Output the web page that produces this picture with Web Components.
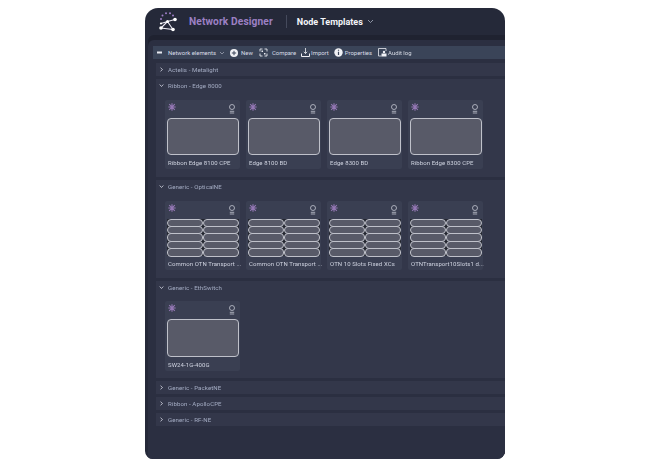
<!DOCTYPE html>
<html><head><meta charset="utf-8"><style>
html,body{margin:0;background:#fff}
body{padding:8px 0 0 145px;font-family:Roboto,"Liberation Sans",sans-serif}
</style></head><body>
<nd-app>
  <nd-header slot="header"></nd-header>
  <nd-toolbar></nd-toolbar>
  <nd-group name="Actelis - Metalight"></nd-group>
  <nd-group name="Ribbon - Edge 8000" open kind="box" style="--pb:8px" labels="Ribbon Edge 8100 CPE|Edge 8100 BD|Edge 8300 BD|Ribbon Edge 8300 CPE"></nd-group>
  <nd-group name="Generic - OpticalNE" open kind="slots" style="--pb:8px" labels="Common OTN Transport ...|Common OTN Transport ...|OTN 10 Slots Fixed XCs|OTNTransport10Slots1 d..."></nd-group>
  <nd-group name="Generic - EthSwitch" open kind="box" style="--pt:7px;--pb:7px;--ch:70px;--ih:38px" labels="SW24-1G-400G"></nd-group>
  <nd-group name="Generic - PacketNE"></nd-group>
  <nd-group name="Ribbon - ApolloCPE"></nd-group>
  <nd-group name="Generic - RF-NE"></nd-group>
</nd-app>
<script>
function def(name, html, init){
  customElements.define(name, class extends HTMLElement{
    constructor(){super();this.attachShadow({mode:'open'}).innerHTML=html;}
    connectedCallback(){init&&init.call(this,this.shadowRoot);}
  });
}
def('nd-app',`<style>
:host{display:flex;flex-direction:column;width:360px;height:451px;background:#252939;border-radius:13px 13px 8px 8px;overflow:hidden;color:#fff;filter:blur(.3px)}
.panel{flex:1;margin:5px 0 0 3px;padding:6px 0 0 5px;background:#2b2f41;border-radius:6px 0 0 0;display:flex;flex-direction:column;box-shadow:0 -5px 0 #1f2230}
.list{display:flex;flex-direction:column;gap:3px;margin:4px 0 0 3px}
</style><slot name="header"></slot><div class="panel"><slot name="tb"></slot><div class="list"><slot></slot></div></div>`,
function(){const t=this.querySelector('nd-toolbar');t&&t.setAttribute('slot','tb');});

def('nd-header',`<style>
:host{display:flex;align-items:center;height:27px;padding-left:13px;flex:none}
svg{display:block;flex:none}
.t{font:700 10.2px Roboto,sans-serif;color:#9c80c4;margin-left:10px;letter-spacing:.12px}
.d{width:1px;height:13px;background:#454a5c;margin:0 10px 0 13px}
.n{font:700 9px Roboto,sans-serif;color:#f4f5fa}
.c{margin-left:4px}
</style>
<svg width="21" height="21" viewBox="0 0 21 21" fill="none">
<g fill="#a07fc8"><circle cx="3" cy="8" r="1"/><circle cx="4.500" cy="4.500" r="1"/><circle cx="8" cy="2.200" r="1"/><circle cx="12" cy="2.200" r="1"/><circle cx="15" cy="4.500" r="1"/></g>
<path d="M3 17 9.500 10.500 17 8.500M9.500 10.500 15 18.500 3 17M3 12.500 9.500 10.500" stroke="#eceaf3" stroke-width="1.100"/>
<g fill="#fff"><circle cx="3" cy="17" r="1.800"/><circle cx="9.500" cy="10.500" r="1.500"/><circle cx="17" cy="8.500" r="1.800"/><circle cx="15" cy="18.500" r="1.800"/><circle cx="3" cy="12.500" r="1.100"/></g></svg>
<span class="t">Network Designer</span><span class="d"></span><span class="n">Node Templates</span>
<svg class="c" width="7" height="5" viewBox="0 0 7 5" fill="none"><path d="M1 1 3.500 3.500 6 1" stroke="#aab0c0" stroke-width=".8"/></svg>`);

def('nd-toolbar',`<style>
:host{display:flex;align-items:center;height:13px;background:#3a4458;font:400 5.95px Roboto,sans-serif;color:#d8dce6;padding-left:4px;flex:none}
span{display:inline-flex;align-items:center;white-space:nowrap}
svg{display:block;flex:none}
</style>
<svg width="6" height="3" style="margin-right:5px"><rect width="5" height="2" y=".5" fill="#e8eaf0"/></svg>
<span>Network elements</span>
<svg width="6" height="4" viewBox="0 0 6 4" fill="none" style="margin:0 5px 0 3px"><path d="M1 1 3 3 5 1" stroke="#aab0c0" stroke-width=".7"/></svg>
<svg width="8" height="8" viewBox="0 0 8 8" style="margin-right:3px"><circle cx="4" cy="4" r="4" fill="#f0f1f5"/><path d="M4 1.800v4.400M1.800 4h4.400" stroke="#3a4458" stroke-width="1"/></svg>
<span style="margin-right:6px">New</span>
<svg width="9" height="9" viewBox="0 0 9 9" fill="#e8eaf0" style="margin-right:4px"><path d="M1 3.500V1h2.500M5.500 1H8v2.500M8 5.500V8H5.500M3.500 8H1V5.500" fill="none" stroke="#e8eaf0" stroke-width=".9"/><rect x="2.500" y="2.500" width="1.500" height="1.500"/><rect x="5" y="5" width="1.500" height="1.500"/></svg>
<span style="margin-right:5px">Compare</span>
<svg width="9" height="9" viewBox="0 0 9 9" fill="none" stroke="#f0f1f5" style="margin-right:1px"><path d="M4.500 0v5.500M2.800 3.800 4.500 5.500 6.200 3.800" stroke-width=".8"/><path d="M.5 5.500v3h8v-3" stroke-width="1"/></svg>
<span style="margin-right:5px">Import</span>
<svg width="9" height="9" viewBox="0 0 9 9" style="margin-right:2px"><circle cx="4.500" cy="4.500" r="4.200" fill="#f0f1f5"/><path d="M4.500 3.700v3.300M4.500 1.700v1.100" stroke="#3a4458" stroke-width="1.200"/></svg>
<span style="margin-right:6px">Properties</span>
<svg width="9" height="9" viewBox="0 0 9 9" fill="none" style="margin-right:1px"><path d="M.5 8V.5h7.500v2.500M.5 8h3" stroke="#e8eaf0" stroke-width=".8"/><rect x="3.500" y="5.500" width="5" height="3" fill="#f0f1f5"/><circle cx="6" cy="4" r="1.200" fill="#f0f1f5"/></svg>
<span>Audit log</span>`);

def('nd-group',`<style>
:host{display:block;background:#33374a;flex:none}
.h{display:flex;align-items:center;height:13px;padding-left:3px;font:400 6.1px Roboto,sans-serif;color:#a5adc4;letter-spacing:.08px}
.h svg{margin-right:4px;display:block;flex:none}
.b{display:none;padding:var(--pt,8px) 0 var(--pb,8px) 9px;gap:6px}
:host([open]) .b{display:flex}
</style><div class="h"><svg class="ch" width="5" height="5" viewBox="0 0 5 5" fill="none"><path d="M1.500 .7 3.500 2.500 1.500 4.300" stroke="#d5d9e4" stroke-width=".8"/></svg><span class="n"></span></div><div class="b"></div>`,
function(s){
  s.querySelector('.n').textContent=this.getAttribute('name');
  if(this.hasAttribute('open')){
    s.querySelector('.ch path').setAttribute('d','M.7 1.500 2.500 3.500 4.300 1.500');
    const kind=this.getAttribute('kind'),b=s.querySelector('.b');
    (this.getAttribute('labels')||'').split('|').forEach(l=>{
      const c=document.createElement('nd-card');c.setAttribute('kind',kind);c.setAttribute('label',l);b.appendChild(c);
    });
  }
});

def('nd-slots',`<style>
:host{display:grid;grid-template-columns:1fr 1fr;grid-template-rows:repeat(5,1fr);width:100%;height:100%;background:#22252f}
i{display:block;background:#585a68;border:1px solid #bfc1ca;border-radius:4px;box-sizing:border-box;margin:-.5px 0 -.5px 0}
</style><i></i><i></i><i></i><i></i><i></i><i></i><i></i><i></i><i></i><i></i>`);

def('nd-card',`<style>
:host{display:flex;flex-direction:column;width:75px;height:var(--ch,69px);background:#3a3f52;border-radius:2px;flex:none}
.top{display:flex;justify-content:space-between;height:18px;padding:3px 5px 0 3px;box-sizing:border-box}
svg{display:block}
.img{margin:0 1px 0 2px;height:var(--ih,37px);flex:none;box-sizing:border-box;background:#585a68;border:1px solid #bfc1ca;border-radius:4px}
.img.slots{background:none;border:0;border-radius:0}
.l{font:400 6px Roboto,sans-serif;color:#cfd3e0;padding:4px 0 0 3px;white-space:nowrap;letter-spacing:.08px}
</style>
<div class="top">
<svg width="8" height="8" viewBox="0 0 8 8" stroke="#9477b4" stroke-width="1.100"><path d="M1.200 1.200 6.800 6.800M6.800 1.200 1.200 6.800M4 .3v7.400M.3 4h7.400"/></svg>
<svg width="6" height="10" viewBox="0 0 6 10" fill="none" stroke="#c4c7d2" stroke-width=".8" style="margin-top:1px"><circle cx="3" cy="3" r="2.500"/><path d="M.8 7.300h4.400M.8 9h4.400"/></svg>
</div><div class="img"></div><div class="l"></div>`,
function(s){
  s.querySelector('.l').textContent=this.getAttribute('label');
  if(this.getAttribute('kind')==='slots'){
    const i=s.querySelector('.img');i.classList.add('slots');i.appendChild(document.createElement('nd-slots'));
  }
});
</script></body></html>
